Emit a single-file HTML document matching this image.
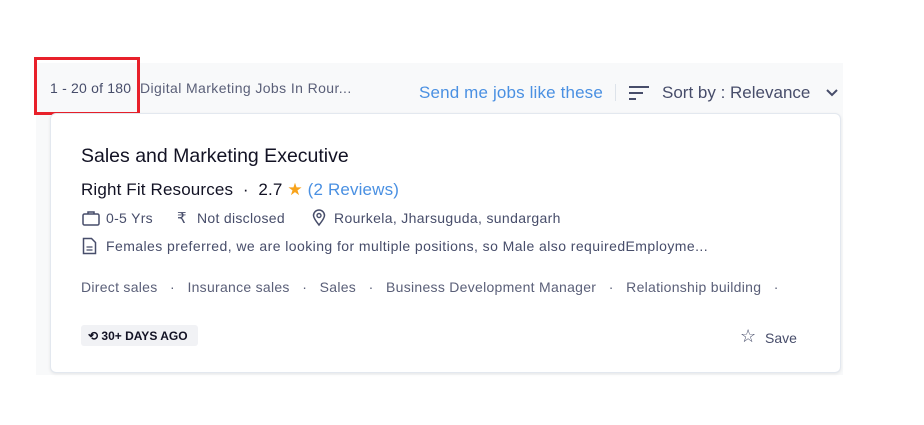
<!DOCTYPE html>
<html><head><style>
body{margin:0;width:924px;height:425px;background:#fff;font-family:"Liberation Sans",Arial,sans-serif;position:relative;overflow:hidden}
.bg{position:absolute;left:36px;top:63px;width:807px;height:312px;background:#f8f9fa}
.card{position:absolute;left:50px;top:113px;width:789px;height:258px;background:#fff;border:1px solid #e3e8ef;border-radius:6px;box-shadow:0 1px 3px rgba(0,0,0,.08)}
.t{position:absolute;white-space:nowrap}
.red{position:absolute;left:34px;top:57px;width:100px;height:52px;border:3px solid #e8202a}
</style></head><body>
<div class="bg"></div>
<div class="t" style="left:50px;top:80px;font-size:14px;color:#474d6a;letter-spacing:.2px">1 - 20 of 180</div>
<div class="t" style="left:140px;top:80px;font-size:14px;color:#5a5f78;letter-spacing:.4px">Digital Marketing Jobs In Rour...</div>
<div class="red"></div>
<div class="t" style="left:419px;top:83px;font-size:17px;color:#4a90e2;letter-spacing:.15px">Send me jobs like these</div>
<div style="position:absolute;left:615px;top:84px;width:1px;height:17px;background:#dde3ea"></div>
<svg style="position:absolute;left:629px;top:86px" width="22" height="16"><rect x="0" y="0" width="20" height="2" fill="#474d6a"/><rect x="0" y="6" width="14" height="2" fill="#474d6a"/><rect x="0" y="12" width="7" height="2" fill="#474d6a"/></svg>
<div class="t" style="left:662px;top:83px;font-size:17px;color:#474d6a">Sort by : Relevance</div>
<svg style="position:absolute;left:825px;top:88px" width="14" height="10"><path d="M2 2 L7 7 L12 2" stroke="#474d6a" stroke-width="2" fill="none"/></svg>
<div class="card"></div>
<div class="t" style="left:81px;top:145px;font-size:19.5px;color:#121224">Sales and Marketing Executive</div>
<div class="t" style="left:81px;top:180px;font-size:17px;color:#121224;letter-spacing:.15px">Right Fit Resources &nbsp;·&nbsp; 2.7 <span style="color:#f8a31b">★</span> <span style="color:#4a90e2">(2 Reviews)</span></div>
<svg style="position:absolute;left:82px;top:210px" width="18" height="16"><rect x="1" y="4" width="16" height="11" rx="1.5" stroke="#474d6a" stroke-width="1.5" fill="none"/><path d="M6 4V2h6v2" stroke="#474d6a" stroke-width="1.5" fill="none"/></svg>
<div class="t" style="left:106px;top:210px;font-size:14px;color:#474d6a;letter-spacing:.3px">0-5 Yrs</div>
<div class="t" style="left:177px;top:209px;font-size:15px;color:#474d6a">₹</div>
<div class="t" style="left:197px;top:210px;font-size:14px;color:#474d6a;letter-spacing:.3px">Not disclosed</div>
<svg style="position:absolute;left:312px;top:209px" width="14" height="18"><path d="M7 16C3 11 1.5 8.5 1.5 6.5a5.5 5.5 0 0 1 11 0C12.5 8.5 11 11 7 16z" stroke="#474d6a" stroke-width="1.5" fill="none"/><circle cx="7" cy="6.5" r="2" stroke="#474d6a" stroke-width="1.4" fill="none"/></svg>
<div class="t" style="left:334px;top:210px;font-size:14px;color:#474d6a;letter-spacing:.35px">Rourkela, Jharsuguda, sundargarh</div>
<svg style="position:absolute;left:82px;top:237px" width="15" height="18"><path d="M1.5 1.5h8l4 4v11h-12z" stroke="#474d6a" stroke-width="1.5" fill="none"/><path d="M4.5 10h6M4.5 13h6" stroke="#474d6a" stroke-width="1.3"/></svg>
<div class="t" style="left:106px;top:238px;font-size:14px;color:#474d6a;letter-spacing:.43px">Females preferred, we are looking for multiple positions, so Male also requiredEmployme...</div>
<div class="t" style="left:81px;top:279px;font-size:14px;color:#5a5f78;letter-spacing:.28px">Direct sales &nbsp;&nbsp;·&nbsp;&nbsp; Insurance sales &nbsp;&nbsp;·&nbsp;&nbsp; Sales &nbsp;&nbsp;·&nbsp;&nbsp; Business Development Manager &nbsp;&nbsp;·&nbsp;&nbsp; Relationship building &nbsp;&nbsp;·</div>
<div style="position:absolute;left:81px;top:325px;width:117px;height:21px;background:#f1f2f5;border-radius:3px"></div>
<div class="t" style="left:88px;top:329px;font-size:12px;font-weight:bold;color:#121224">⟲ 30+ DAYS AGO</div>
<div class="t" style="left:740px;top:326px;font-size:18px;color:#474d6a">☆</div>
<div class="t" style="left:765px;top:330px;font-size:14px;color:#474d6a">Save</div>
</body></html>
